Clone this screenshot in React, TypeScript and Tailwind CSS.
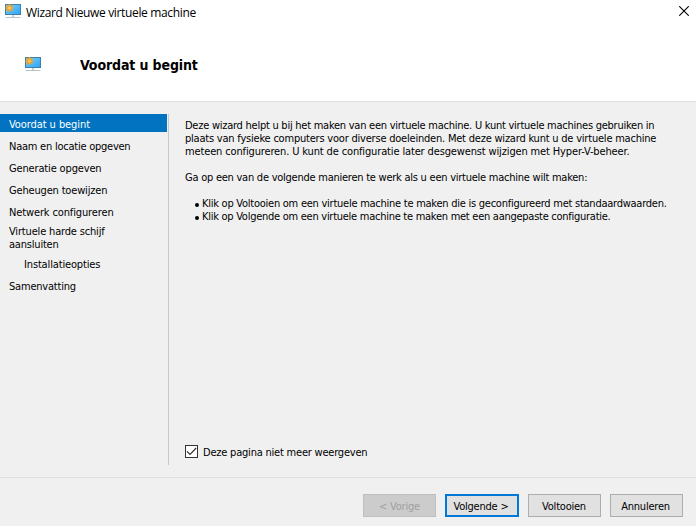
import type { ReactNode } from "react";

function MonitorIcon({ className }: { className: string }) {
  return (
    <svg className={className} viewBox="0 0 16 16" fill="none">
      <defs>
        <linearGradient id="screen" x1="0" y1="0" x2="1" y2="1">
          <stop offset="0" stopColor="#7ccdf7" />
          <stop offset="1" stopColor="#2ba6f7" />
        </linearGradient>
      </defs>
      <rect x="0.500" y="0.500" width="15" height="10" fill="url(#screen)" stroke="#3f7ea6" />
      <path d="M7 11h2v2H7z" fill="#c4d0d8" />
      <path d="M0.500 13.500h15" stroke="#b9c5cd" />
      <path d="M4.500 0v8M0.500 4h8M1.500 1l6 6M7.500 1l-6 6" stroke="#f2a52e" strokeWidth="1.300" />
      <circle cx="4.500" cy="4" r="2.500" fill="#f5a623" />
      <circle cx="4.500" cy="4" r="1.200" fill="#fbd08a" />
    </svg>
  );
}

function Line({ children, className }: { children: ReactNode; className: string }) {
  return <div className={`h-[13px] whitespace-nowrap leading-[13px] ${className}`}>{children}</div>;
}

const steps = [
  { label: "Naam en locatie opgeven", style: "mt-2 tracking-[-0.240px]" },
  { label: "Generatie opgeven", style: "mt-[9px] tracking-[-0.150px]" },
  { label: "Geheugen toewijzen", style: "mt-[9px] tracking-[-0.170px]" },
  { label: "Netwerk configureren", style: "mt-[9px] tracking-[-0.130px]" },
  { label: "Virtuele harde schijf", style: "mt-[6px] tracking-[-0.170px]" },
  { label: "aansluiten", style: "tracking-[-0.200px]" },
  { label: "Installatieopties", style: "mt-[7px] pl-[15px] tracking-[-0.150px]" },
  { label: "Samenvatting", style: "mt-[9px] tracking-[-0.200px]" },
];

export default function App() {
  return (
    <div className="flex h-[526px] w-[696px] flex-col overflow-hidden bg-[#f0f0f0] font-['DejaVu_Sans_Condensed','DejaVu_Sans',sans-serif] text-[11px] text-black">
      <header className="h-[102px] shrink-0 border-b border-[#dfdfdf] bg-white">
        <div className="flex h-6 items-center justify-between pl-[5px] pr-[7px]">
          <div className="flex items-center">
            <MonitorIcon className="h-4 w-4" />
            <h1 className="ml-[5px] whitespace-nowrap pt-px font-['Open_Sans','Noto_Sans',sans-serif] text-[12px] leading-4 tracking-[-0.350px]">Wizard Nieuwe virtuele machine</h1>
          </div>
          <svg className="mt-[-2px] h-[10px] w-[10px]" viewBox="0 0 10 10">
            <path d="M0.200 0.200l9.600 9.600M9.800 0.200l-9.600 9.600" stroke="#000" strokeWidth="1.100" />
          </svg>
        </div>
        <div className="flex items-start pl-[25px] pt-8">
          <MonitorIcon className="mt-px h-4 w-4" />
          <h2 className="ml-[39px] whitespace-nowrap text-[14px] font-bold leading-[18px] tracking-[-0.120px]">Voordat u begint</h2>
        </div>
      </header>
      <main className="flex h-[375px] shrink-0 pt-3">
        <nav className="h-[351px] w-[169px] border-r border-[#c9c9c9]">
          <div className="h-[18px] w-[167px] bg-[#0173c1] pl-[9px] pt-1 text-white">
            <Line className="tracking-[-0.080px]">Voordat u begint</Line>
          </div>
          <div className="pl-[9px]">
            {steps.map((s) => (
              <Line key={s.label} className={s.style}>{s.label}</Line>
            ))}
          </div>
        </nav>
        <section className="flex h-[351px] flex-1 flex-col justify-between pl-4 pt-[5px]">
          <div>
            <Line className="tracking-[-0.250px]">Deze wizard helpt u bij het maken van een virtuele machine. U kunt virtuele machines gebruiken in</Line>
            <Line className="tracking-[-0.210px]">plaats van fysieke computers voor diverse doeleinden. Met deze wizard kunt u de virtuele machine</Line>
            <Line className="tracking-[-0.140px]">meteen configureren. U kunt de configuratie later desgewenst wijzigen met Hyper-V-beheer.</Line>
            <Line className="mt-[13px] tracking-[-0.245px]">Ga op een van de volgende manieren te werk als u een virtuele machine wilt maken:</Line>
            <ul className="mt-[13px] pl-[10px]">
              <li className="flex items-center">
                <i className="mr-[3px] mt-[2px] h-1 w-1 rounded-full bg-black" />
                <Line className="tracking-[-0.250px]">Klik op Voltooien om een virtuele machine te maken die is geconfigureerd met standaardwaarden.</Line>
              </li>
              <li className="flex items-center">
                <i className="mr-[3px] mt-[2px] h-1 w-1 rounded-full bg-black" />
                <Line className="tracking-[-0.265px]">Klik op Volgende om een virtuele machine te maken met een aangepaste configuratie.</Line>
              </li>
            </ul>
          </div>
          <label className="mb-[7px] flex items-start">
            <span className="flex h-[13px] w-[13px] items-center justify-center border border-[#333] bg-white">
              <svg className="h-[11px] w-[11px]" viewBox="0 0 11 11" fill="none">
                <path d="M1 5.300l3 3L10.200 2" stroke="#333" strokeWidth="1.200" />
              </svg>
            </span>
            <Line className="ml-[5px] mb-[-1px] mt-px tracking-[-0.210px]">Deze pagina niet meer weergeven</Line>
          </label>
        </section>
      </main>
      <footer className="flex flex-1 border-t border-[#dfdfdf] pl-[363px] pt-4 tracking-[-0.220px]">
        <button className="h-[23px] w-[73px] border border-[#bfbfbf] bg-[#cccccc] pt-[3px] text-[#a0a0a0]">&lt; Vorige</button>
        <button className="ml-[9px] h-[23px] w-[74px] border-2 border-[#0078d7] bg-[#e1e1e1] pr-[2px] pt-[3px]">Volgende &gt;</button>
        <button className="ml-[9px] h-[23px] w-[73px] border border-[#adadad] bg-[#e1e1e1] pr-px pt-[3px]">Voltooien</button>
        <button className="ml-[9px] h-[23px] w-[73px] border border-[#adadad] bg-[#e1e1e1] pr-[2px] pt-[3px]">Annuleren</button>
      </footer>
    </div>
  );
}
